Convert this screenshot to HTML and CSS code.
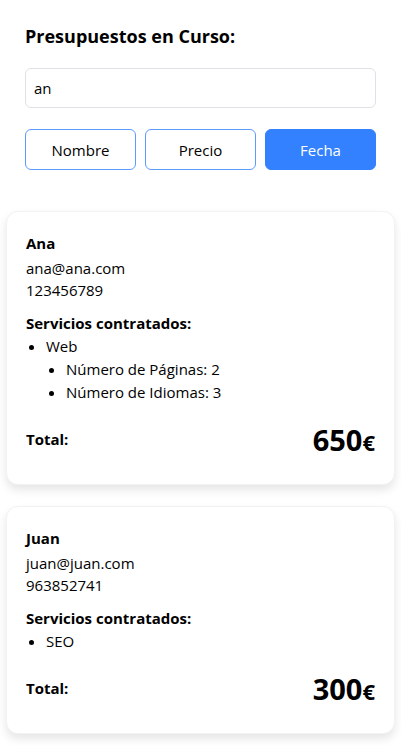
FILE: index.html
```html
<!DOCTYPE html>
<html lang="es">
<head>
<meta charset="utf-8">
<title>Presupuestos en Curso</title>
<link rel="stylesheet" href="styles.css">
</head>
<body>
<div class="top">
  <h2 class="title">Presupuestos en Curso:</h2>
  <input class="search" type="text" value="an">
  <div class="sort">
    <button class="btn btn-outline">Nombre</button>
    <button class="btn btn-outline">Precio</button>
    <button class="btn btn-solid">Fecha</button>
  </div>
</div>
<div class="cards">
  <div class="card">
    <div class="name">Ana</div>
    <div class="line">ana@ana.com</div>
    <div class="line">123456789</div>
    <div class="services">Servicios contratados:</div>
    <ul class="list">
      <li>Web
        <ul class="list sub">
          <li>Número de Páginas: 2</li>
          <li>Número de Idiomas: 3</li>
        </ul>
      </li>
    </ul>
    <div class="total">
      <span class="total-label">Total:</span>
      <span class="amount">650<span class="euro">€</span></span>
    </div>
  </div>
  <div class="card">
    <div class="name">Juan</div>
    <div class="line">juan@juan.com</div>
    <div class="line">963852741</div>
    <div class="services">Servicios contratados:</div>
    <ul class="list">
      <li>SEO</li>
    </ul>
    <div class="total">
      <span class="total-label">Total:</span>
      <span class="amount">300<span class="euro">€</span></span>
    </div>
  </div>
</div>
</body>
</html>
```
FILE: styles.css
```css
* { box-sizing: border-box; }
body {
  margin: 0;
  background: #fff;
  color: #000;
  font-family: "Segoe UI", "Open Sans", "Noto Sans", sans-serif;
  font-size: 15px;
}
.top { padding: 24px 25px 0; }
.title {
  margin: 0;
  font-size: 18px;
  line-height: 24px;
  font-weight: 700;
}
.search {
  display: block;
  width: 100%;
  margin-top: 20px;
  height: 40px;
  border: 1px solid #dee2e6;
  border-radius: 6px;
  padding: 0 8px;
  font-family: inherit;
  font-size: 15px;
  color: #000;
}
.sort {
  margin-top: 21px;
  display: grid;
  grid-template-columns: 1fr 1fr 1fr;
  gap: 9px;
}
.btn {
  height: 41px;
  border-radius: 6px;
  font-family: inherit;
  font-size: 15px;
  padding: 0;
}
.btn-outline {
  background: #fff;
  border: 1px solid #5c9cff;
  color: #000;
}
.btn-solid {
  background: #3381ff;
  border: 1px solid #3381ff;
  color: #fff;
}
.cards {
  margin-top: 41px;
  padding: 0 6px 12px;
  display: flex;
  flex-direction: column;
  gap: 21px;
}
.card {
  background: #fff;
  border: 1px solid #f2f2f2;
  border-radius: 12px;
  box-shadow: 0 5px 10px rgba(0, 0, 0, 0.1);
  padding: 20px 19px 23px;
}
.name { font-weight: 700; line-height: 22px; margin-bottom: 3px; }
.line { line-height: 22px; }
.services { font-weight: 700; line-height: 22px; margin-top: 11px; }
.list {
  margin: 1px 0 0;
  padding-left: 20px;
  line-height: 23px;
  list-style: disc;
}
.list.sub { margin: 0; list-style: disc; }
.total {
  margin-top: 17px;
  display: flex;
  justify-content: space-between;
  align-items: center;
}
.total-label { font-weight: 700; margin-top: -4px; }
.amount {
  font-weight: 700;
  font-size: 29px;
  line-height: 37px;
}
.euro { font-size: 22px; }
```
